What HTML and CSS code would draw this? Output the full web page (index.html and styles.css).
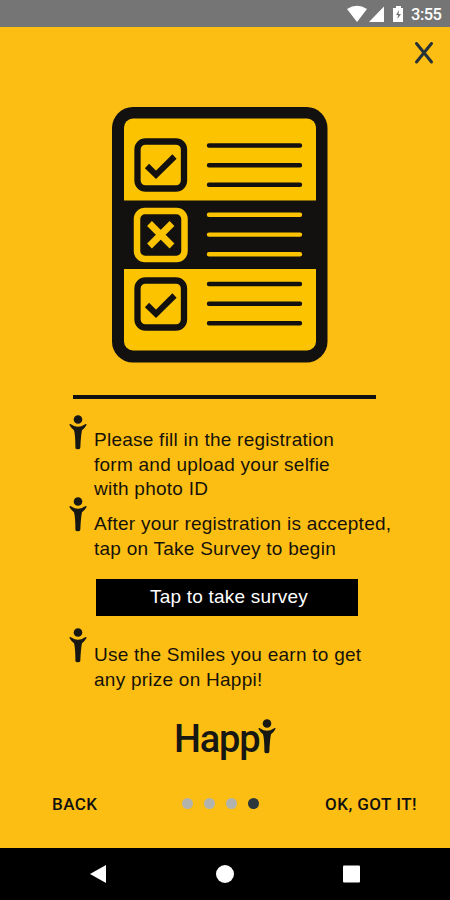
FILE: index.html
```html
<!DOCTYPE html>
<html lang="en">
<head>
<meta charset="utf-8">
<title>Happi</title>
<link rel="stylesheet" href="styles.css">
</head>
<body>
<svg width="0" height="0" class="defs">
  <symbol id="person" viewBox="0 0 18 35">
    <circle cx="9" cy="4.5" r="4.3"/>
    <path d="M.3 9.8Q.8 8.400 2.3 9.400Q9 14 15.7 9.400Q17.2 8.400 17.7 9.800Q15.700 13.300 13 15.300Q11.900 20 11.300 33Q11.1 34.3 8.800 34.3Q6.500 34.3 6.400 33Q6.4 20 5 15.3Q2.3 13.3.3 9.8Z"/>
  </symbol>
</svg>
<div class="screen">
  <header class="status">
    <svg class="status-icons" width="60" height="18" viewBox="0 0 60 18">
      <path d="M0 4Q10 -2.5 20 4L10 17Z"/>
      <path d="M22 17L37 1.500V17Z"/>
      <path d="M46 3H49V1H54V3H56V17H46Z"/>
      <path class="bolt" d="M52 5L49 10H51L50.500 14L54 9H51.600Z"/>
    </svg>
    <span class="time">3:55</span>
  </header>
  <main class="content">
    <div class="top">
      <svg class="close" width="20" height="24" viewBox="0 0 20 24"><path d="M2.500 2.500L17.500 21M17.500 2.500L2.500 21"/></svg>
    </div>
    <svg class="survey" width="216" height="256" viewBox="112 107 216 256">
      <rect x="112" y="107" width="215.500" height="255.500" rx="21" fill="#12110f"/>
      <rect x="124" y="118.500" width="192" height="232" rx="9" fill="#fbc300"/>
      <path d="M123 200.500H317V269H123Z" fill="#12110f"/>
      <g class="ink">
        <rect x="137.500" y="141.500" width="46.500" height="47" rx="8" stroke-width="6.300"/>
        <path d="M147 166L156 174.800L174.500 156.500" stroke-width="6"/>
        <rect x="137.500" y="280.500" width="46.500" height="47" rx="8" stroke-width="6.300"/>
        <path d="M147 305L156 313.800L174.500 295.500" stroke-width="6"/>
        <path class="rules" d="M209 145.500H300M209 165.200H300M209 184.700H300M209 284H300M209 303.700H300M209 323.300H300"/>
      </g>
      <g class="gold">
        <rect x="137" y="211" width="47.500" height="48" rx="8" stroke-width="6.500"/>
        <path d="M149.500 223.500L172 246M172 223.500L149.500 246" stroke-width="6.800"/>
        <path class="rules" d="M209 214.800H300M209 234.600H300M209 254.200H300"/>
      </g>
    </svg>
    <div class="divider"></div>
    <section class="step first">
      <svg class="person"><use href="#person"/></svg>
      <p>Please fill in the registration<br>form and upload your selfie<br>with photo ID</p>
    </section>
    <section class="step second">
      <svg class="person"><use href="#person"/></svg>
      <p>After your registration is accepted,<br>tap on Take Survey to begin</p>
    </section>
    <button class="take">Tap to take survey</button>
    <section class="step third">
      <svg class="person"><use href="#person"/></svg>
      <p>Use the Smiles you earn to get<br>any prize on Happi!</p>
    </section>
    <div class="logo">
      <span>Happ</span>
      <svg><use href="#person"/></svg>
    </div>
    <footer class="actions">
      <span class="back">BACK</span>
      <div class="dots"><i></i><i></i><i></i><i class="on"></i></div>
      <span class="ok">OK, GOT IT!</span>
    </footer>
  </main>
  <nav class="navbar">
    <svg width="18" height="20"><path d="M1 10L17 1V19Z"/></svg>
    <svg width="18" height="20"><circle cx="9" cy="10" r="9"/></svg>
    <svg width="18" height="20"><rect x="0" y="1.500" width="17" height="17" rx="1"/></svg>
  </nav>
</div>
</body>
</html>
```
FILE: styles.css
```css
* { box-sizing: border-box; }
body { margin: 0; font-family: "Liberation Sans", Arial, sans-serif; }
svg { display: block; flex: none; }
.defs { display: none; }
.screen { width: 450px; height: 900px; display: flex; flex-direction: column; background: #fdbe14; overflow: hidden; }
.status { height: 27px; flex: none; background: #757575; color: #fff; display: flex; align-items: center; justify-content: flex-end; padding-right: 9px; gap: 4px; }
.status-icons { fill: #fff; }
.status-icons .bolt { fill: #757575; }
.time { font: 500 16.5px/27px Roboto, sans-serif; width: 30px; white-space: nowrap; letter-spacing: -.5px; padding-top: 1px; }
.content { flex: 1; display: flex; flex-direction: column; }
.top { height: 80px; display: flex; justify-content: flex-end; padding: 14px 16px 0 0; }
.close { fill: none; stroke: #263238; stroke-width: 3; stroke-linecap: round; }
.survey { margin-left: 112px; fill: none; }
.ink { stroke: #12110f; }
.gold { stroke: #fbc300; }
.rules { stroke-width: 4.4; stroke-linecap: round; }
.divider { width: 303px; height: 4px; margin: 32px 0 0 73px; background: #12110f; }
.step { display: flex; padding-left: 69px; gap: 7px; color: #16120a; }
.step p { margin: 13px 0 0; font-size: 19px; line-height: 24.5px; white-space: nowrap; letter-spacing: .25px; }
.person { width: 18px; height: 35px; fill: #171713; }
.first { margin-top: 16px; height: 82px; }
.second { height: 82px; }
.second p, .third p { margin-top: 15px; }
.take { width: 262px; height: 37px; margin: 0 0 0 96px; padding: 0 0 2px 4px; border: 0; background: #000; color: #fff; font: 19px "Liberation Sans", Arial, sans-serif; letter-spacing: .2px; }
.third { margin-top: 12px; height: 91px; }
.logo { display: flex; height: 50px; padding-left: 174px; color: #171713; }
.logo span { width: 84px; font: 500 38px/41px Roboto, sans-serif; letter-spacing: -1.2px; }
.logo svg { width: 18px; height: 35px; fill: #171713; }
.actions { display: flex; align-items: center; height: 22px; margin-top: 23px; padding: 0 33px 0 52px; font: 500 17px/22px Roboto, sans-serif; color: #111; }
.back { width: 130px; padding-top: 1px; letter-spacing: .4px; }
.dots { display: flex; gap: 11px; flex: 1; }
.dots i { width: 11px; height: 11px; border-radius: 50%; background: #b2b3ad; }
.dots .on { background: #2c383b; }
.ok { white-space: nowrap; padding-top: 1px; letter-spacing: .45px; }
.navbar { height: 52px; flex: none; background: #000; fill: #fff; display: flex; justify-content: space-between; align-items: center; padding: 0 89px; }
```
